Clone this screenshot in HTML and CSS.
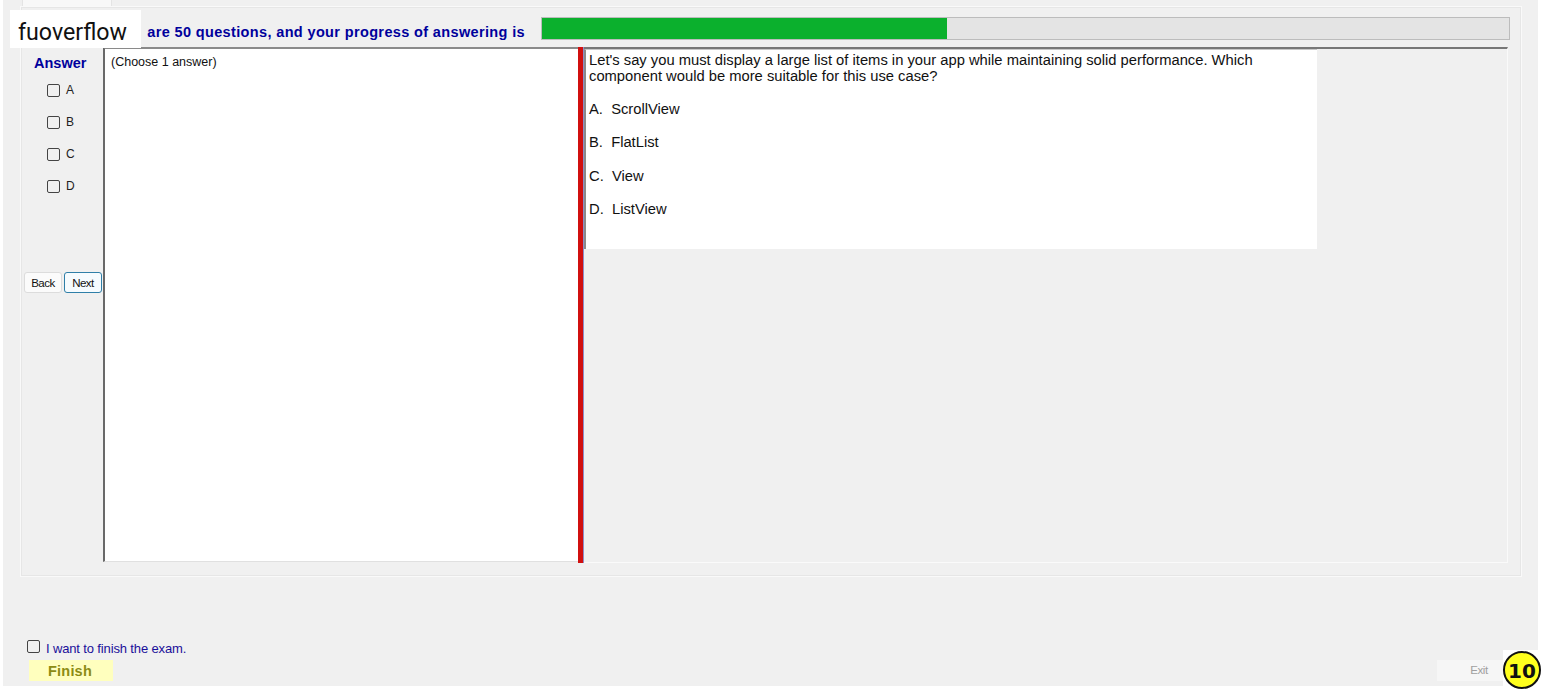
FILE: index.html
```html
<!DOCTYPE html>
<html lang="en">
<head>
    <meta charset="UTF-8">
    <meta name="viewport" content="width=device-width, initial-scale=1.0">
    <title>Exam</title>
    <link rel="stylesheet" href="styles.css">
</head>
<body>
    <div class="window">
        <div class="tab"></div>
        <div class="tab-page">
            <div class="progress-row">
                <div class="progress-text">are 50 questions, and your progress of answering is</div>
                <div class="progress-bar"><div class="progress-fill"></div></div>
            </div>
            <div class="main-row">
                <div class="answer-col">
                    <div class="answer-title">Answer</div>
                    <label class="option"><input type="checkbox"><span>A</span></label>
                    <label class="option"><input type="checkbox"><span>B</span></label>
                    <label class="option"><input type="checkbox"><span>C</span></label>
                    <label class="option"><input type="checkbox"><span>D</span></label>
                    <div class="nav-buttons">
                        <button type="button" class="nav-btn">Back</button>
                        <button type="button" class="nav-btn nav-btn-active">Next</button>
                    </div>
                </div>
                <div class="choose-panel">(Choose 1 answer)</div>
                <div class="splitter"></div>
                <div class="question-panel">
                    <div class="question-box">
                        <p class="question-text">Let's say you must display a large list of items in your app while maintaining solid performance. Which component would be more suitable for this use case?</p>
                        <p class="choice">A.&nbsp; ScrollView</p>
                        <p class="choice">B.&nbsp; FlatList</p>
                        <p class="choice">C.&nbsp; View</p>
                        <p class="choice">D.&nbsp; ListView</p>
                    </div>
                </div>
            </div>
        </div>
        <div class="footer">
            <label class="finish-check"><input type="checkbox"><span>I want to finish the exam.</span></label>
            <div class="footer-buttons">
                <div class="finish-btn">Finish</div>
                <div class="exit-btn">Exit</div>
            </div>
        </div>
    </div>
    <div class="logo">fuoverflow</div>
    <div class="badge-bg"><div class="badge">10</div></div>
</body>
</html>
```

FILE: styles.css
```css
html, body {
    margin: 0;
    padding: 0;
    background: #fff;
    overflow: hidden;
}
body {
    font-family: "Liberation Sans", Arial, sans-serif;
    height: 690px;
}
.window {
    margin-left: 3px;
    width: 1535px;
    height: 686px;
    background: #f0f0f0;
    box-sizing: border-box;
    padding-left: 17px;
}
.tab {
    width: 88px;
    height: 6px;
    margin-left: 2px;
    background: #f8f8f8;
    border-right: 1px solid #e4e4e4;
    border-left: 1px solid #e4e4e4;
}
.tab-page {
    width: 1502px;
    height: 571px;
    box-sizing: border-box;
    border: 1px solid #f9f9f9;
    padding: 10px 1px 0 1px;
    box-shadow: 0 0 0 1px #e6e6e6 inset;
}
.progress-row {
    display: flex;
    align-items: flex-start;
    height: 24px;
}
.progress-text {
    width: 503px;
    flex: none;
    font-size: 14.5px;
    font-weight: bold;
    color: #00009c;
    text-align: right;
    white-space: nowrap;
    padding-top: 7px;
    letter-spacing: 0.36px;
}
.progress-bar {
    flex: none;
    margin-left: 16px;
    width: 969px;
    height: 23px;
    box-sizing: border-box;
    background: #e4e4e4;
    border: 1px solid #bcbcbc;
}
.progress-fill {
    width: 405px;
    height: 21px;
    background: #0bb02d;
}
.main-row {
    display: flex;
    margin-top: 6px;
    height: 516px;
}
.answer-col {
    width: 81px;
    flex: none;
}
.answer-title {
    font-size: 14.5px;
    font-weight: bold;
    color: #00009c;
    margin: 8px 0 0 12px;
    height: 19px;
}
.option {
    display: flex;
    align-items: center;
    height: 32px;
    padding-left: 25px;
    font-size: 12px;
    color: #222;
}
.option input, .finish-check input {
    width: 13px;
    height: 13px;
    margin: 0;
    appearance: none;
    background: #f0f0f0;
    border: 1px solid #444;
    border-radius: 2px;
}
.option span {
    margin-left: 6px;
    margin-top: 0;
}
.nav-buttons {
    display: flex;
    gap: 2px;
    margin: 70px 0 0 2px;
}
.nav-btn {
    width: 38px;
    height: 21px;
    padding: 0;
    background: #fbfbfb;
    border: 1px solid #dcdcdc;
    border-radius: 3px;
    font-family: "Liberation Sans", Arial, sans-serif;
    font-size: 11.5px;
    letter-spacing: -0.5px;
    color: #111;
}
.nav-btn-active {
    border: 1px solid #2f7fa8;
    background: #f6fbfe;
}
.choose-panel {
    width: 475px;
    height: 515px;
    flex: none;
    box-sizing: border-box;
    background: #fff;
    border-left: 2px solid #696969;
    border-top: 2px solid #8a8a8a;
    border-bottom: 1px solid #e0e0e0;
    padding: 6px 0 0 6px;
    font-size: 12.5px;
    color: #111;
}
.splitter {
    width: 5px;
    height: 516px;
    flex: none;
    background: #d1100f;
    border-right: 1px solid #8e8ec8;
}
.question-panel {
    width: 924px;
    flex: none;
    box-sizing: border-box;
    border-top: 2px solid #777;
    border-right: 1px solid #fafafa;
    border-bottom: 1px solid #fafafa;
}
.question-box {
    width: 733px;
    height: 200px;
    box-sizing: border-box;
    background: #fff;
    border-left: 2px solid #8a8a8a;
    border-top: 1px solid #c8c8c8;
    padding: 2px 0 0 3px;
    font-size: 14.75px;
    line-height: 16px;
    color: #111;
}
.question-text {
    margin: 0 40px 17px 0;
}
.choice {
    margin: 0 0 17.3px 0;
}
.footer {
    margin-top: 62px;
    padding-left: 7px;
}
.finish-check {
    display: flex;
    align-items: center;
    height: 18px;
    font-size: 13px;
    letter-spacing: -0.14px;
    color: #1a0f9a;
}
.finish-check input {
    margin-top: -4px;
}
.finish-check span {
    margin-left: 6px;
}
.footer-buttons {
    display: flex;
    justify-content: space-between;
    width: 1474px;
    margin: 3px 0 0 2px;
}
.finish-btn {
    width: 84px;
    height: 21px;
    line-height: 22px;
    background: #ffffbe;
    color: #8c8c14;
    font-size: 14.5px;
    font-weight: bold;
    text-align: center;
    letter-spacing: 0.2px;
    padding-right: 2px;
    box-sizing: border-box;
}
.exit-btn {
    width: 66px;
    height: 21px;
    line-height: 21px;
    background: #f6f6f6;
    color: #a0a0a0;
    font-size: 11.5px;
    letter-spacing: -0.4px;
    text-align: center;
    padding-left: 18px;
    box-sizing: border-box;
}
/* pasted over the window */
.logo {
    position: absolute;
    left: 10px;
    top: 10px;
    width: 131px;
    height: 38px;
    box-sizing: border-box;
    padding-left: 8px;
    background: #fff;
    font-family: Roboto, "Liberation Sans", sans-serif;
    font-size: 23.2px;
    line-height: 44px;
    color: #111;
}
.badge-bg {
    position: absolute;
    left: 1503px;
    top: 650px;
    width: 39px;
    height: 40px;
    background: #fff;
}
.badge {
    width: 38px;
    height: 38px;
    box-sizing: border-box;
    margin: 1px 0 0 0;
    border: 2px solid #111;
    border-radius: 50%;
    background: #ffff1e;
    text-align: center;
    font-family: "DejaVu Sans", sans-serif;
    font-weight: bold;
    font-size: 20px;
    line-height: 36px;
    color: #111;
}
```
